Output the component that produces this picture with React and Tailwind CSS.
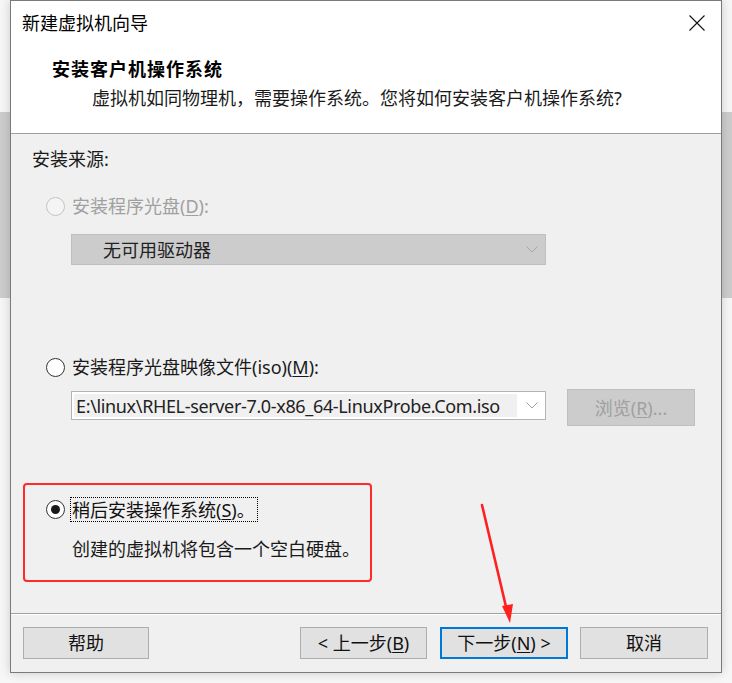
import React from "react";

const CJK = { fontFamily: '"Noto Sans", "Noto Sans CJK SC", sans-serif' };

function Radio({ state }) {
  if (state === "disabled")
    return <span className="box-border w-[19px] h-[19px] rounded-full border border-[#c4c4c4] bg-[#f4f4f4] shrink-0" />;
  return (
    <span className="box-border w-[19px] h-[19px] rounded-full border border-[#333333] bg-white shrink-0 flex items-center justify-center">
      {state === "checked" && <span className="w-[9px] h-[9px] rounded-full bg-[#1a1a1a]" />}
    </span>
  );
}

function Chevron({ color }) {
  return (
    <svg width="12" height="7" viewBox="0 0 12 7" className="shrink-0">
      <path d="M0.5 0.5 L6 6 L11.5 0.5" fill="none" stroke={color} strokeWidth="1" />
    </svg>
  );
}

function Btn({ children, primary }) {
  return (
    <div
      className={
        "box-border h-[32px] flex items-center justify-center bg-[#e1e1e1] text-[18px] leading-[24px] text-[#111] " +
        (primary ? "border-2 border-[#0078d7]" : "border border-[#adadad]")
      }
    >
      {children}
    </div>
  );
}

export default function App() {
  return (
    <div className="relative w-[732px] h-[683px] overflow-hidden bg-[#f7f7f7]" style={CJK}>
      {/* desktop background band */}
      <div className="absolute left-0 right-0 top-[112px] h-[186px] bg-[#cdcdcd]" />

      {/* dialog window */}
      <div className="absolute left-[10px] top-0 w-[712px] h-[673px] box-border border border-[#7a7a7a] bg-[#f0f0f0] flex flex-col shadow-[0_0_10px_rgba(0,0,0,0.18)]">
        {/* header */}
        <div className="h-[133px] bg-white border-b border-[#a0a0a0] flex flex-col shrink-0">
          <div className="flex items-center justify-between pt-[10px] pl-[11px] pr-[16px]">
            <span className="text-[18px] leading-[24px] text-black">新建虚拟机向导</span>
            <svg width="16" height="16" viewBox="0 0 16 16">
              <path d="M0.5 0.5 L15.5 15.5 M15.5 0.5 L0.5 15.5" stroke="#111" strokeWidth="1.1" fill="none" />
            </svg>
          </div>
          <div className="mt-[22px] pl-[41px] text-[18px] leading-[24px] font-bold tracking-[1px] text-black">安装客户机操作系统</div>
          <div className="mt-[5px] pl-[81px] text-[18px] leading-[24px] text-[#1a1a1a]">
            虚拟机如同物理机，需要操作系统。您将如何安装客户机操作系统?
          </div>
        </div>

        {/* body */}
        <div className="flex-1 flex flex-col pl-[21px] pt-[13px]">
          <div className="text-[18px] leading-[24px] text-[#1a1a1a]">安装来源:</div>

          <div className="mt-[23px] flex items-center gap-[7px] pl-[14px]">
            <Radio state="disabled" />
            <span className="text-[18px] leading-[24px] text-[#a0a0a0]">
              安装程序光盘(<u className="underline-offset-2">D</u>):
            </span>
          </div>

          <div className="mt-[16px] ml-[39px] w-[475px] h-[31px] box-border border border-[#bfbfbf] bg-[#cccccc] flex items-center justify-between pl-[31px] pr-[7px]">
            <span className="text-[18px] leading-[24px] text-[#222]">无可用驱动器</span>
            <Chevron color="#a8a8a8" />
          </div>

          <div className="mt-[90px] flex items-center gap-[7px] pl-[14px]">
            <Radio state="off" />
            <span className="text-[18px] leading-[24px] text-[#1a1a1a]">
              安装程序光盘映像文件(iso)(<u className="underline-offset-2">M</u>):
            </span>
          </div>

          <div className="mt-[10px] flex items-start pl-[39px]">
            <div className="mt-[2px] w-[475px] h-[29px] box-border border border-[#b4b4b4] bg-white flex items-center pl-[2px] pr-[7px]">
              <div className="w-[443px] h-[23px] bg-[#f0f0f0] flex items-center pl-[2px] text-[18px] leading-[24px] tracking-[-0.35px] text-[#222] whitespace-nowrap overflow-hidden">
                E:\linux\RHEL-server-7.0-x86_64-LinuxProbe.Com.iso
              </div>
              <div className="flex-1" />
              <Chevron color="#a0a0a0" />
            </div>
            <div className="ml-[21px] w-[128px] h-[37px] box-border border border-[#bfbfbf] bg-[#cccccc] flex items-center justify-center text-[18px] leading-[24px] text-[#a0a0a0]">
              浏览(<u className="underline-offset-2">R</u>)...
            </div>
          </div>

          <div className="mt-[71px] flex items-center gap-[5px] pl-[14px]">
            <Radio state="checked" />
            <span className="box-border h-[25px] flex items-center pl-[1px] pr-[2px] border border-dotted border-black text-[18px] leading-[24px] text-[#111]">
              稍后安装操作系统(<u className="underline-offset-2">S</u>)。
            </span>
          </div>
          <div className="mt-[15px] pl-[40px] text-[18px] leading-[24px] text-[#1a1a1a]">
            创建的虚拟机将包含一个空白硬盘。
          </div>
        </div>

        {/* footer */}
        <div className="h-[59px] shrink-0 border-t border-[#a0a0a0] shadow-[inset_0_1px_0_#ffffff] flex items-start pt-[13px] pl-[12px] pr-[13px]">
          <div className="w-[126px]">
            <Btn>帮助</Btn>
          </div>
          <div className="flex-1" />
          <div className="w-[127px]">
            <Btn>&lt; 上一步(<u className="underline-offset-2">B</u>)</Btn>
          </div>
          <div className="w-[128px] ml-[13px]">
            <Btn primary>下一步(<u className="underline-offset-2">N</u>) &gt;</Btn>
          </div>
          <div className="w-[128px] ml-[12px]">
            <Btn>取消</Btn>
          </div>
        </div>
      </div>

      {/* red annotation box */}
      <div className="absolute left-[23px] top-[483px] w-[349px] h-[99px] box-border border-2 border-[#ff2a2a] rounded-[4px]" />

      {/* red annotation arrow */}
      <svg className="absolute left-0 top-0" width="732" height="683" viewBox="0 0 732 683">
        <line x1="482" y1="505" x2="507" y2="611" stroke="#ff2020" strokeWidth="2.6" strokeLinecap="round" />
        <polygon points="510,623 502,606 513,604" fill="#ff2020" />
      </svg>
    </div>
  );
}
